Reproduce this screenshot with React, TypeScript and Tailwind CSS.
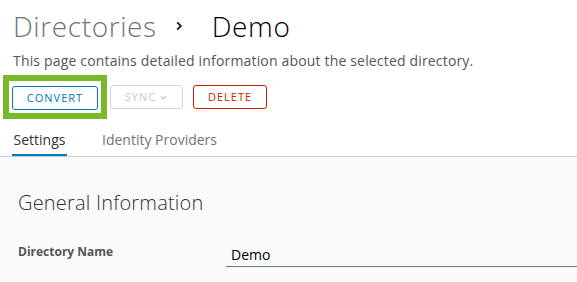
import React from "react";

const font = { fontFamily: '"Open Sans", "Liberation Sans", sans-serif' };

const Chevron: React.FC<{ className?: string; down?: boolean }> = ({ className, down }) => (
  <svg viewBox="0 0 10 10" className={className} fill="none" stroke="currentColor" strokeWidth={1.6}>
    {down ? <path d="M2 3.5 L5 6.5 L8 3.5" /> : <path d="M3.5 2 L6.5 5 L3.5 8" />}
  </svg>
);

const App: React.FC = () => {
  return (
    <div className="w-[577px] h-[282px] overflow-hidden bg-white flex flex-col" style={font}>
      <div className="pl-[13px] pt-[8px]">
        <div className="flex items-center h-[36px]">
          <span className="text-[28px] font-light text-[#737373] tracking-[0.6px]">Directories</span>
          <Chevron className="w-[12px] h-[12px] ml-[16px] mr-[27px] text-[#222]" />
          <span className="text-[28px] font-light text-black tracking-[0.6px]">Demo</span>
        </div>
        <p className="mt-[8px] text-[14px] text-[#565656] leading-[18px] tracking-[0.17px]">
          This page contains detailed information about the selected directory.
        </p>
        <div className="flex items-center mt-[5px] -ml-[10px]">
          <div className="border-[6px] border-[#79b829] p-[3px]">
            <button className="h-[24px] w-[86px] rounded-[3px] border border-[#0079b8] text-[#0079b8] text-[11px] tracking-[1px] font-medium">
              CONVERT
            </button>
          </div>
          <button className="ml-[3px] h-[24px] w-[73px] rounded-[3px] border border-[#d6d6d6] text-[#c8c8c8] text-[11px] tracking-[1px] font-medium flex items-center justify-center gap-[3px]">
            SYNC
            <Chevron down className="w-[9px] h-[9px]" />
          </button>
          <button className="ml-[10px] h-[24px] w-[74px] rounded-[3px] border border-[#c92100] text-[#c92100] text-[11px] tracking-[1px] font-medium">
            DELETE
          </button>
        </div>
        <div className="flex mt-[6px]">
          <div className="w-[55px] -ml-[1px] flex flex-col">
            <span className="text-[14px] text-[#333] leading-[29px] text-center">Settings</span>
            <div className="h-[3px] bg-[#0079b8]" />
          </div>
          <span className="ml-[35px] text-[14px] text-[#737373] leading-[29px]">Identity Providers</span>
        </div>
      </div>
      <div className="-mt-[1px] border-t border-[#cfcfcf] bg-[#fafafa] flex-1 pl-[18px]">
        <h2 className="mt-[31px] text-[20px] font-light text-[#333] leading-[30px] tracking-[0.2px]">General Information</h2>
        <div className="flex items-end mt-[25px]">
          <span className="w-[208px] text-[12px] font-bold text-[#565656] pb-[6px]">Directory Name</span>
          <div className="flex-1 border-b border-[#6a7780] pl-[5px] pb-[1px] text-[14px] text-black">Demo</div>
        </div>
      </div>
    </div>
  );
};

export default App;
